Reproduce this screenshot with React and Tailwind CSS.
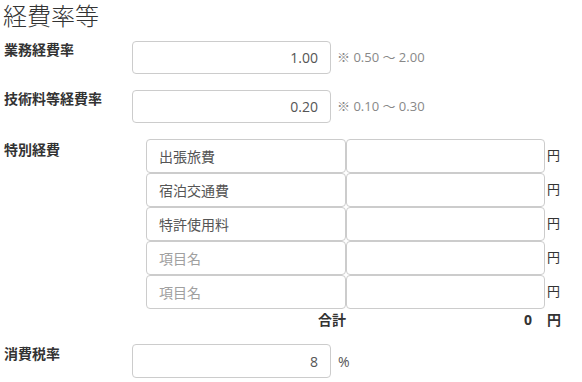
const fixedRate = [
  { label: '業務経費率', value: '1.00', hint: '※ 0.50 ～ 2.00' },
  { label: '技術料等経費率', value: '0.20', hint: '※ 0.10 ～ 0.30' },
]

const specials = [
  { name: '出張旅費' },
  { name: '宿泊交通費' },
  { name: '特許使用料' },
  { name: '', placeholder: '項目名' },
  { name: '', placeholder: '項目名' },
]

const font = { fontFamily: '"Open Sans", "Noto Sans CJK JP", sans-serif' }

export default function App() {
  return (
    <div className="w-[582px] h-[382px] bg-white overflow-hidden text-[#333]" style={font}>
      {/* Heading */}
      <h2 className="text-[24px] leading-[32px] pl-[3px] font-light text-[#333]">経費率等</h2>

      {/* Rate rows */}
      <div className="mt-[9px] flex flex-col gap-[16px]">
        {fixedRate.map((r) => (
          <div key={r.label} className="flex items-start">
            <div className="w-[132px] pl-[4px] text-[14px] leading-[18px] font-bold">{r.label}</div>
            <input
              readOnly
              value={r.value}
              className="w-[199px] h-[33px] border border-[#ccc] rounded-[4px] text-right pr-[12px] text-[14px] text-[#555] outline-none"
            />
            <span className="ml-[6px] self-center text-[13px] text-[#888]">{r.hint}</span>
          </div>
        ))}
      </div>

      {/* Special expenses */}
      <div className="mt-[16px] flex items-start">
        <div className="w-[146px] pl-[4px] pt-[2px] text-[14px] leading-[18px] font-bold">特別経費</div>
        <div className="flex flex-col">
          {specials.map((s, i) => (
            <div key={i} className="flex items-center">
              <input
                readOnly
                value={s.name}
                placeholder={s.placeholder}
                className="w-[200px] h-[34px] border border-[#ccc] rounded-[4px] pl-[12px] text-[14px] text-[#555] placeholder:text-[#a0a0a0] outline-none"
              />
              <input
                readOnly
                value=""
                className="w-[199px] h-[34px] border border-[#ccc] rounded-[4px] outline-none"
              />
              <span className="ml-[2px] text-[13px] text-[#333]">円</span>
            </div>
          ))}
          <div className="flex items-center h-[20px] text-[14px] font-bold">
            <span className="w-[200px] text-right">合計</span>
            <span className="w-[186px] text-right">0</span>
            <span className="ml-[15px]">円</span>
          </div>
        </div>
      </div>

      {/* Consumption tax */}
      <div className="mt-[15px] flex items-start">
        <div className="w-[132px] pl-[4px] pt-[1px] text-[14px] leading-[18px] font-bold">消費税率</div>
        <input
          readOnly
          value="8"
          className="w-[199px] h-[34px] border border-[#ccc] rounded-[4px] text-right pr-[12px] text-[14px] text-[#555] outline-none"
        />
        <span className="ml-[7px] self-center text-[14px] text-[#555]">%</span>
      </div>
    </div>
  )
}
